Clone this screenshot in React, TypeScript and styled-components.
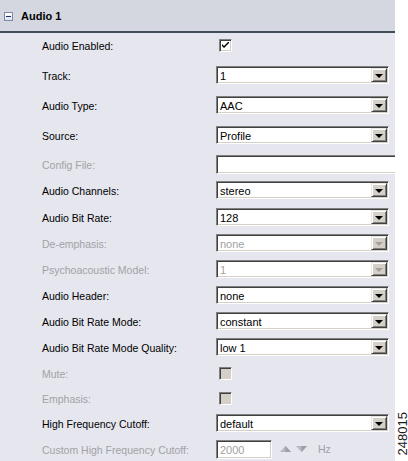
import React from "react";
import styled, { createGlobalStyle } from "styled-components";

const GlobalStyle = createGlobalStyle`
  html, body { margin: 0; padding: 0; background: #ffffff; }
  body { font-family: "Liberation Sans", Arial, sans-serif; }
`;

const Page = styled.div`
  position: relative;
  width: 408px;
  height: 461px;
  background: #ffffff;
  overflow: hidden;
`;

const Panel = styled.div`
  width: 395px;
  height: 461px;
  background: #e5e6ee;
  overflow: hidden;
`;

const Header = styled.div`
  height: 31px;
  background: #d4d7df;
  display: flex;
  align-items: center;
  padding: 1px 0 0 4px;
  box-sizing: border-box;
  gap: 8px;
`;

const Toggle = styled.div`
  width: 9px;
  height: 9px;
  box-sizing: border-box;
  border: 1px solid #7a8aa8;
  background: linear-gradient(#ffffff, #dfe3ee);
  display: flex;
  align-items: center;
  justify-content: center;
  &::after {
    content: "";
    width: 5px;
    height: 1px;
    background: #1d2e6b;
  }
`;

const Title = styled.div`
  font-size: 11px;
  font-weight: bold;
  color: #000;
`;

const Divider = styled.div`
  height: 2px;
  background: #414d59;
`;

const Form = styled.div`
  display: flex;
  flex-direction: column;
  padding-left: 42px;
`;

const Row = styled.div<{ $mt: number }>`
  display: flex;
  align-items: center;
  height: 18px;
  margin-top: ${(p) => p.$mt}px;
`;

const Label = styled.div<{ $disabled?: boolean }>`
  width: 174px;
  flex: none;
  font-size: 10.5px;
  padding-top: 1px;
  color: ${(p) => (p.$disabled ? "#a2a2a6" : "#000")};
  white-space: nowrap;
`;

const Sunken = styled.div<{ $w: number; $h?: number; $disabled?: boolean }>`
  width: ${(p) => p.$w}px;
  height: ${(p) => p.$h ?? 18}px;
  flex: none;
  box-sizing: border-box;
  border-style: solid;
  border-width: 1px;
  border-color: #808080 #ffffff #ffffff #808080;
  box-shadow: inset 1px 1px 0 #404040, inset -1px -1px 0 #d4d0c8;
  background: #ffffff;
  display: flex;
  align-items: center;
  font-size: 11px;
  color: ${(p) => (p.$disabled ? "#a0a0a0" : "#000")};
  padding: 1px 1px 0 3px;
`;

const Value = styled.span`
  flex: 1;
  white-space: nowrap;
`;

const DropButton = styled.div<{ $disabled?: boolean }>`
  width: 16px;
  height: 14px;
  margin-top: -1px;
  box-sizing: border-box;
  background: #d4d0c8;
  border-style: solid;
  border-width: 1px;
  border-color: #e8e6e0 #404040 #404040 #e8e6e0;
  box-shadow: inset 1px 1px 0 #ffffff, inset -1px -1px 0 #808080;
  display: flex;
  align-items: center;
  justify-content: center;
  &::after {
    content: "";
    width: 0;
    height: 0;
    border-left: 4px solid transparent;
    border-right: 4px solid transparent;
    border-top: 4px solid ${(p) => (p.$disabled ? "#a0a0a0" : "#000")};
    margin-top: 1px;
  }
`;

const Check = styled.div<{ $disabled?: boolean }>`
  width: 13px;
  height: 13px;
  margin-left: 3px;
  flex: none;
  box-sizing: border-box;
  border-style: solid;
  border-width: 1px;
  border-color: #808080 #ffffff #ffffff #808080;
  box-shadow: inset 1px 1px 0 #404040, inset -1px -1px 0 #d4d0c8;
  background: ${(p) => (p.$disabled ? "#d4d0c8" : "#ffffff")};
  display: flex;
  align-items: center;
  justify-content: center;
`;

const Spin = styled.div`
  display: flex;
  align-items: center;
  gap: 5px;
  margin-left: 8px;
`;

const Unit = styled.span`
  font-size: 10.5px;
  color: #a0a0a6;
  margin-left: 11px;
`;

const FigureId = styled.div`
  position: absolute;
  left: 382px;
  top: 429px;
  width: 40px;
  text-align: center;
  font-size: 13px;
  line-height: 13px;
  color: #1a1a1a;
  transform: rotate(-90deg);
`;

const SelectBox = ({ value, disabled }: { value: string; disabled?: boolean }) => (
  <Sunken $w={173} $disabled={disabled}>
    <Value>{value}</Value>
    <DropButton $disabled={disabled} />
  </Sunken>
);

const CheckMark = () => (
  <svg width="7" height="7" viewBox="0 0 7 7">
    <path d="M0 2 L0 4 L2 6 L7 1 L7 -1 L2 4 Z" fill="#000" />
  </svg>
);

const Arrow = ({ up }: { up?: boolean }) => (
  <svg width="11" height="7" viewBox="0 0 11 7">
    {up ? (
      <>
        <path d="M5.5 0 L11 6 L0 6 Z" fill="#b6b8c2" />
        <path d="M5.5 0 L11 6 L5.5 6 Z" fill="#9c9ea8" />
      </>
    ) : (
      <>
        <path d="M0 0 L11 0 L5.5 6 Z" fill="#b6b8c2" />
        <path d="M5.5 0 L11 0 L5.5 6 Z" fill="#9c9ea8" />
      </>
    )}
  </svg>
);

type Item =
  | { label: string; mt: number; kind: "select"; value: string; disabled?: boolean }
  | { label: string; mt: number; kind: "check"; checked?: boolean; disabled?: boolean }
  | { label: string; mt: number; kind: "text"; disabled?: boolean }
  | { label: string; mt: number; kind: "number"; value: string; disabled?: boolean };

const items: Item[] = [
  { label: "Audio Enabled:", mt: 3, kind: "check", checked: true },
  { label: "Track:", mt: 12, kind: "select", value: "1" },
  { label: "Audio Type:", mt: 12, kind: "select", value: "AAC" },
  { label: "Source:", mt: 12, kind: "select", value: "Profile" },
  { label: "Config File:", mt: 11, kind: "text", disabled: true },
  { label: "Audio Channels:", mt: 8, kind: "select", value: "stereo" },
  { label: "Audio Bit Rate:", mt: 9, kind: "select", value: "128" },
  { label: "De-emphasis:", mt: 8, kind: "select", value: "none", disabled: true },
  { label: "Psychoacoustic Model:", mt: 8, kind: "select", value: "1", disabled: true },
  { label: "Audio Header:", mt: 8, kind: "select", value: "none" },
  { label: "Audio Bit Rate Mode:", mt: 8, kind: "select", value: "constant" },
  { label: "Audio Bit Rate Mode Quality:", mt: 8, kind: "select", value: "low 1" },
  { label: "Mute:", mt: 8, kind: "check", disabled: true },
  { label: "Emphasis:", mt: 7, kind: "check", disabled: true },
  { label: "High Frequency Cutoff:", mt: 7, kind: "select", value: "default" },
  { label: "Custom High Frequency Cutoff:", mt: 8, kind: "number", value: "2000", disabled: true },
];

const renderControl = (it: Item) => {
  switch (it.kind) {
    case "select":
      return <SelectBox value={it.value} disabled={it.disabled} />;
    case "check":
      return <Check $disabled={it.disabled}>{it.checked && <CheckMark />}</Check>;
    case "text":
      return <Sunken $w={200} $h={19} />;
    case "number":
      return (
        <>
          <Sunken $w={56} $h={19} $disabled>
            <Value>{it.value}</Value>
          </Sunken>
          <Spin>
            <Arrow up />
            <Arrow />
          </Spin>
          <Unit>Hz</Unit>
        </>
      );
  }
};

export default function App() {
  return (
    <Page>
      <GlobalStyle />
      <Panel>
        <Header>
          <Toggle />
          <Title>Audio 1</Title>
        </Header>
        <Divider />
        <Form>
          {items.map((it) => (
            <Row key={it.label} $mt={it.mt}>
              <Label $disabled={it.disabled}>{it.label}</Label>
              {renderControl(it)}
            </Row>
          ))}
        </Form>
      </Panel>
      <FigureId>248015</FigureId>
    </Page>
  );
}
